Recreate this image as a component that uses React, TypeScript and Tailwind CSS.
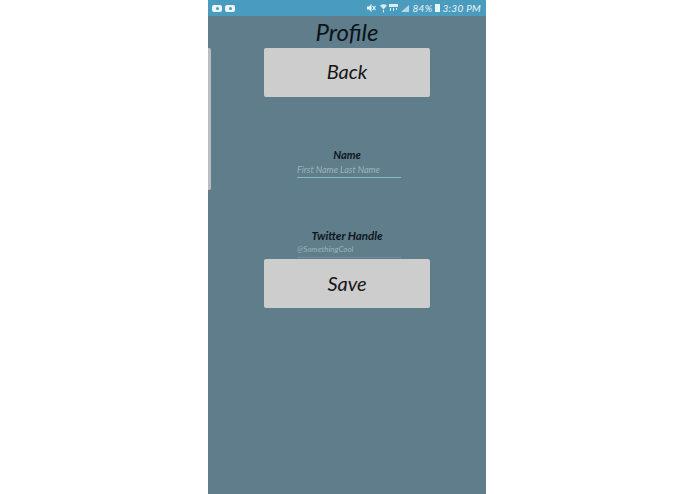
const hand = "font-['Lato',sans-serif] italic";

function Yt() {
  return (
    <div className="flex h-[7px] w-[10px] items-center justify-center rounded-[2px] bg-[#eef5f8]">
      <div className="h-[3px] w-[3px] rounded-full bg-[#4a9cbf]" />
    </div>
  );
}

function StatusIcons() {
  return (
    <svg width="43" height="10" viewBox="0 0 43 10" className="block">
      <path d="M0 3.5h2L4.5 1v8L2 6.5H0z" fill="#eaf3f7" />
      <path d="M5.5 3l3 4M8.5 3l-3 4" stroke="#eaf3f7" strokeWidth="1.2" />
      <path d="M13 2.5q3.5-2.5 7 0l-3.5 4z" fill="#dcebf1" />
      <path d="M16.5 7v2.5" stroke="#dcebf1" strokeWidth="1" />
      <rect x="22" y="1" width="9" height="3" fill="#dcebf1" />
      <path d="M23 5h1v3h-1zM26 5h1v3h-1zM29 5h1v2h-1z" fill="#dcebf1" />
      <path d="M34 9l8-7v7z" fill="#b9d6e2" />
    </svg>
  );
}

function Field({ label, hint, line, labelClass, gap, hintSize }: { label: string; hint: string; line: string; labelClass: string; gap: string; hintSize: string }) {
  return (
    <div className="flex flex-col items-center">
      <div className={`${hand} ${labelClass} font-bold leading-none text-[#0c1820]`}>{label}</div>
      <div className={`ml-[4px] w-[104px] border-b ${line} ${gap} pb-[2px]`}>
        <div className={`${hand} ${hintSize} leading-[11px] text-[#9fb2bc]`}>{hint}</div>
      </div>
    </div>
  );
}

function Btn({ label, pad }: { label: string; pad: string }) {
  return (
    <button className={`flex h-[49px] w-[166px] items-center justify-center rounded-[2px] bg-[#cdcdcd] ${pad} ${hand} text-[20px] text-[#161616]`}>
      {label}
    </button>
  );
}

export default function App() {
  return (
    <div className="flex h-[494px] w-[695px] justify-center overflow-hidden bg-white pr-[1px]">
      <div className="relative flex h-full w-[278px] flex-col items-center bg-[#607d8b]">
        <div className="flex h-[16px] w-full shrink-0 items-center justify-between bg-[#4a9cbf] pl-[4px] pr-[5px]">
          <div className="flex gap-[3px]">
            <Yt />
            <Yt />
          </div>
          <div className="flex items-center">
            <StatusIcons />
            <span className={`${hand} ml-[2px] text-[10px] leading-none tracking-[0.3px] text-[#eaf3f7]`}>84%</span>
            <div className="ml-[3px] h-[8px] w-[5px] bg-[#eaf3f7]" />
            <span className={`${hand} ml-[2px] text-[10px] leading-none tracking-[0.3px] text-[#eaf3f7]`}>3:30 PM</span>
          </div>
        </div>

        <div className={`${hand} h-[32px] text-[24px] leading-[32px] text-[#0a141a]`}>Profile</div>
        <Btn label="Back" pad="pb-[3px]" />

        <div className="mt-[52px]">
          <Field label="Name" hint="First Name Last Name" line="border-[#86b9c6]" labelClass="text-[11px]" gap="mt-[4px]" hintSize="text-[9px]" />
        </div>
        <div className="mt-[52px]">
          <Field label="Twitter Handle" hint="@SomethingCool" line="border-[#6f8f9c]" labelClass="text-[11.5px]" gap="mt-[2px]" hintSize="text-[8px]" />
        </div>
        <div className="mt-[1px]">
          <Btn label="Save" pad="pb-0" />
        </div>

        <div className="absolute left-0 top-[48px] h-[142px] w-[3px] rounded-r-[2px] bg-[#b9bdbf]" />
      </div>
    </div>
  );
}
